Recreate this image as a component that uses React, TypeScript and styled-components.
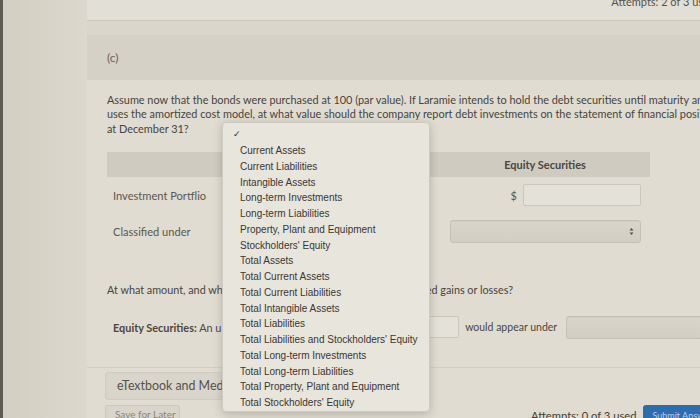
import React from "react";
import styled, { createGlobalStyle } from "styled-components";

const Global = createGlobalStyle`
  html, body { margin: 0; padding: 0; background: #d8d4c9; overflow: hidden; }
  * { box-sizing: border-box; }
`;

const Page = styled.div`
  width: 700px;
  height: 418px;
  display: flex;
  overflow: hidden;
  font-family: Lato, "Open Sans", sans-serif;
  color: #4a4741;
  background: #dad6cb;
`;

const Sidebar = styled.div`
  width: 87px;
  flex: none;
  border-left: 3px solid #5f5a52;
  background: linear-gradient(90deg, #d3cfc3, #dcd8cd);
`;

const Main = styled.div`
  position: relative;
  width: 680px;
  flex: none;
  display: flex;
  flex-direction: column;
`;

const TopCard = styled.div`
  flex: none;
  height: 21px;
  background: #e2dfd6;
  border-bottom: 1px solid #cdc9be;
  display: flex;
  justify-content: flex-end;
  padding-right: 52px;
  overflow: hidden;
`;

const TopAttempts = styled.span`
  font-size: 11px;
  line-height: 11px;
  margin-top: -4px;
  color: #55514a;
  white-space: nowrap;
`;

const Spacer = styled.div`
  flex: none;
  height: 14px;
`;

const SectionHead = styled.div`
  flex: none;
  height: 45px;
  background: #d5d1c6;
  display: flex;
  align-items: center;
  padding-left: 20px;
  font-size: 12px;
  color: #6a665f;
`;

const Content = styled.div`
  flex: 1;
  background: #e0dcd1;
  padding: 12.5px 0 0 20px;
  display: flex;
  flex-direction: column;
`;

const Para = styled.p`
  flex: none;
  margin: 0;
  font-size: 10.9px;
  line-height: 14.5px;
  white-space: nowrap;
  color: #47443e;
`;

const Table = styled.div`
  flex: none;
  margin-top: 16px;
  width: 543px;
  display: grid;
  grid-template-columns: 333px 210px;
`;

const HeadCell = styled.div<{ $bold?: boolean }>`
  height: 25px;
  background: #cfcbc1;
  display: flex;
  align-items: center;
  justify-content: center;
  font-size: 11px;
  font-weight: ${(p) => (p.$bold ? 700 : 400)};
  color: #4a4741;
`;

const LabelCell = styled.div<{ $h: number }>`
  height: ${(p) => p.$h}px;
  display: flex;
  align-items: center;
  padding-left: 6px;
  font-size: 11.1px;
  color: #5a5750;
`;

const ValueCell = styled.div<{ $h: number }>`
  height: ${(p) => p.$h}px;
  display: flex;
  align-items: center;
  justify-content: flex-end;
  padding-right: 9px;
  gap: 6px;
  font-size: 11px;
  color: #5a5750;
`;

const TextInput = styled.div<{ $w: number }>`
  width: ${(p) => p.$w}px;
  flex: none;
  height: 22px;
  background: #e4e1d8;
  border: 1px solid #cbc7bc;
  border-radius: 2px;
`;

const Select = styled.div<{ $w: number }>`
  width: ${(p) => p.$w}px;
  height: 23px;
  flex: none;
  background: linear-gradient(#d9d5cb, #d2cec4);
  border: 1px solid #c4c0b5;
  border-radius: 3px;
  display: flex;
  align-items: center;
  justify-content: flex-end;
  padding-right: 6px;
  box-shadow: inset 0 1px 1px rgba(0,0,0,0.04);
`;

const Arrows = () => (
  <svg width="5" height="9" viewBox="0 0 5 9">
    <path d="M0.5 3.5 L2.5 1 L4.5 3.5 Z M0.5 5.5 L2.5 8 L4.5 5.5 Z" fill="#55524b" />
  </svg>
);

const Question = styled.p`
  flex: none;
  margin: 31.5px 0 0 0;
  font-size: 10.8px;
  line-height: 15px;
  white-space: nowrap;
  color: #47443e;
`;

const AnswerRow = styled.div`
  flex: none;
  margin-top: 19px;
  padding-left: 6px;
  display: flex;
  align-items: center;
  gap: 6px;
  font-size: 10.9px;
  white-space: nowrap;
  color: #4a4741;
`;

const Bold = styled.b`
  font-weight: 700;
`;

const UnderLabel = styled.span`
  font-size: 10.5px;
  margin-right: 3px;
`;

const Footer = styled.div`
  flex: none;
  margin-top: 28.5px;
  margin-left: -20px;
  padding: 3.5px 0 0 18px;
  border-top: 1px solid #d3cfc4;
  display: flex;
  flex-direction: column;
  gap: 5px;
`;

const MediaButton = styled.div`
  width: 160px;
  height: 28px;
  background: #d9d5ca;
  border: 1px solid #d0ccc1;
  border-radius: 3px;
  display: flex;
  align-items: center;
  padding-left: 11px;
  font-size: 12.4px;
  color: #55524b;
  white-space: nowrap;
`;

const BottomBar = styled.div`
  display: flex;
  align-items: flex-start;
`;

const SaveButton = styled.div`
  width: 75px;
  height: 20px;
  background: #d9d5ca;
  border: 1px solid #cdc9be;
  border-radius: 3px;
  padding: 2px 0 0 9px;
  font-size: 10px;
  color: #8a867e;
  white-space: nowrap;
`;

const BottomAttempts = styled.span`
  margin-left: 351px;
  margin-top: 4px;
  font-size: 11.2px;
  color: #3f3c37;
  white-space: nowrap;
`;

const SubmitButton = styled.div`
  margin-left: 7px;
  width: 70px;
  height: 22px;
  background: #2d6cae;
  border-radius: 3px 0 0 0;
  padding: 5px 0 0 9px;
  font-size: 9px;
  color: #b9cfe6;
  white-space: nowrap;
`;

const Dropdown = styled.div`
  position: absolute;
  left: 135px;
  top: 122px;
  width: 208px;
  height: 290px;
  background: #e8e5dd;
  border: 1px solid #cfcbc2;
  border-radius: 4px;
  box-shadow: 0 2px 8px rgba(60, 50, 40, 0.25);
  padding-top: 1px;
  font-family: "Liberation Sans", Arial, sans-serif;
  font-size: 10px;
  color: #3a3732;
`;

const CheckRow = styled.div`
  height: 19px;
  display: flex;
  align-items: center;
  padding-left: 10px;
  font-family: "DejaVu Sans", sans-serif;
  font-size: 9px;
  font-weight: 700;
  color: #2f2c28;
`;

const Item = styled.div`
  height: 15.75px;
  line-height: 15.75px;
  padding-left: 17px;
  white-space: nowrap;
`;

const options = [
  "Current Assets",
  "Current Liabilities",
  "Intangible Assets",
  "Long-term Investments",
  "Long-term Liabilities",
  "Property, Plant and Equipment",
  "Stockholders' Equity",
  "Total Assets",
  "Total Current Assets",
  "Total Current Liabilities",
  "Total Intangible Assets",
  "Total Liabilities",
  "Total Liabilities and Stockholders' Equity",
  "Total Long-term Investments",
  "Total Long-term Liabilities",
  "Total Property, Plant and Equipment",
  "Total Stockholders' Equity",
];

export default function App() {
  return (
    <>
      <Global />
      <Page>
        <Sidebar />
        <Main>
          <TopCard>
            <TopAttempts>Attempts: 2 of 3 used</TopAttempts>
          </TopCard>
          <Spacer />
          <SectionHead>(c)</SectionHead>
          <Content>
            <Para>
              Assume now that the bonds were purchased at 100 (par value). If Laramie intends to hold the debt securities until maturity and
              <br />
              uses the amortized cost model, at what value should the company report debt investments on the statement of financial position
              <br />
              at December 31?
            </Para>
            <Table>
              <HeadCell />
              <HeadCell $bold>Equity Securities</HeadCell>
              <LabelCell $h={36}>Investment Portflio</LabelCell>
              <ValueCell $h={36}>
                $<TextInput $w={118} />
              </ValueCell>
              <LabelCell $h={37}>Classified under</LabelCell>
              <ValueCell $h={37}>
                <Select $w={191}>
                  <Arrows />
                </Select>
              </ValueCell>
            </Table>
            <Question>
              At what amount, and where, would the company report the unrealized gains or losses?
            </Question>
            <AnswerRow>
              <span>
                <Bold>Equity Securities:</Bold> An unrealized holding gain or loss of $
              </span>
              <TextInput $w={73} />
              <UnderLabel>would appear under</UnderLabel>
              <Select $w={150}>
                <Arrows />
              </Select>
            </AnswerRow>
            <Footer>
              <MediaButton>eTextbook and Media</MediaButton>
              <BottomBar>
                <SaveButton>Save for Later</SaveButton>
                <BottomAttempts>Attempts: 0 of 3 used</BottomAttempts>
                <SubmitButton>Submit Answer</SubmitButton>
              </BottomBar>
            </Footer>
          </Content>
          <Dropdown>
            <CheckRow>✓</CheckRow>
            {options.map((o) => (
              <Item key={o}>{o}</Item>
            ))}
          </Dropdown>
        </Main>
      </Page>
    </>
  );
}
